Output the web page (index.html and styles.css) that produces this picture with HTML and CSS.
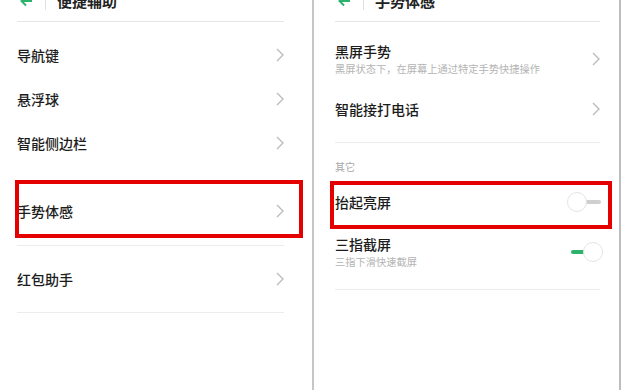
FILE: index.html
```html
<!DOCTYPE html>
<html lang="zh-CN">
	<head>
		<meta charset="UTF-8">
		<meta name="viewport" content="width=device-width, initial-scale=1">
		<title>手势体感</title>
		<link rel="stylesheet" href="styles.css">
	</head>
	<body>
		<div class="screens">
			<!-- left screen: 便捷辅助 -->
			<div class="panel panel-left">
				<div class="bar">
					<svg class="back" width="13" height="12" viewBox="0 0 13 12"><path d="M12 6H2M6 1.5L1.5 6 6 10.5" fill="none" stroke="#2bb36b" stroke-width="2"/></svg>
					<span class="sep"></span>
					<span class="title">便捷辅助</span>
				</div>
				<div class="list">
					<div class="item"><span>导航键</span><svg class="chev" width="8" height="14" viewBox="0 0 8 14"><polyline points="1,1 7,7 1,13"/></svg></div>
					<div class="item"><span>悬浮球</span><svg class="chev" width="8" height="14" viewBox="0 0 8 14"><polyline points="1,1 7,7 1,13"/></svg></div>
					<div class="item"><span>智能侧边栏</span><svg class="chev" width="8" height="14" viewBox="0 0 8 14"><polyline points="1,1 7,7 1,13"/></svg></div>
					<div class="item gesture marked"><span>手势体感</span><svg class="chev" width="8" height="14" viewBox="0 0 8 14"><polyline points="1,1 7,7 1,13"/></svg></div>
					<div class="rule rule-a"></div>
					<div class="item redpack"><span>红包助手</span><svg class="chev" width="8" height="14" viewBox="0 0 8 14"><polyline points="1,1 7,7 1,13"/></svg></div>
					<div class="rule"></div>
				</div>
			</div>

			<!-- right screen: 手势体感 -->
			<div class="panel panel-right">
				<div class="bar">
					<svg class="back" width="13" height="12" viewBox="0 0 13 12"><path d="M12 6H2M6 1.5L1.5 6 6 10.5" fill="none" stroke="#2bb36b" stroke-width="2"/></svg>
					<span class="sep"></span>
					<span class="title">手势体感</span>
				</div>
				<div class="list">
					<div class="item two first">
						<div class="text">
							<div class="name">黑屏手势</div>
							<div class="sub">黑屏状态下，在屏幕上通过特定手势快捷操作</div>
						</div>
						<svg class="chev" width="8" height="14" viewBox="0 0 8 14"><polyline points="1,1 7,7 1,13"/></svg>
					</div>
					<div class="item call"><span>智能接打电话</span><svg class="chev" width="8" height="14" viewBox="0 0 8 14"><polyline points="1,1 7,7 1,13"/></svg></div>
					<div class="rule"></div>
					<div class="label">其它</div>
					<div class="item raise marked">
						<span>抬起亮屏</span>
						<span class="switch"><span class="track"></span><span class="knob"></span></span>
					</div>
					<div class="item two shot">
						<div class="text">
							<div class="name">三指截屏</div>
							<div class="sub">三指下滑快速截屏</div>
						</div>
						<span class="switch on"><span class="track"></span><span class="knob"></span></span>
					</div>
					<div class="rule rule-b"></div>
				</div>
			</div>
		</div>
	</body>
</html>
```

FILE: styles.css
```css
html, body { margin: 0; padding: 0; background: #fff; }
body { font-family: "Noto Sans CJK SC", "Noto Sans", sans-serif; color: #1c1c1c; }

.screens { display: flex; height: 390px; overflow: hidden; }

.panel { background: #fff; }
.panel-left { width: 267px; padding: 0 28px 0 17px; border-right: 2px solid #c6c6c6; }
.panel-right { width: 265px; padding: 0 19px 0 21px; border-right: 2px solid #bdbdbd; }

/* title bar, cut off at the top of the shot */
.bar {
	display: flex;
	align-items: flex-start;
	box-sizing: border-box;
	height: 31px;
	margin-top: -9px;
	border-bottom: 1px solid #e6e6e6;
}
.back { margin: 4px 0 0 3px; }
.sep { width: 1px; height: 18px; margin: 1px 0 0 12px; background: #e0e0e0; }
.title { margin-left: 11px; font-size: 15px; line-height: 20px; font-weight: bold; color: #222; }

.list { padding-top: 11px; }
.panel-right .list { padding-top: 0; }

.item {
	position: relative;
	display: flex;
	align-items: center;
	justify-content: space-between;
	height: 44px;
	font-size: 14px;
	line-height: 18px;
	font-weight: 500;
}
.chev { fill: none; stroke: #bcbcbc; stroke-width: 1.4; flex: none; }

.rule { height: 1px; background: #ececec; }
.rule-a { margin-top: 5px; }
.rule-b { margin-top: 15px; }

/* left screen rows */
.item.gesture { height: 58px; margin-top: 17px; }
.item.redpack { height: 66px; }

/* right screen rows */
.item.first { height: 74px; }
.item.call { height: 26px; padding-bottom: 20px; }
.item.raise { height: 56px; }
.item.shot { height: 44px; }

.name { font-size: 14px; line-height: 18px; }
.sub { margin-top: 2px; font-size: 10.25px; line-height: 14px; font-weight: normal; color: #b4b4b4; }

.label { margin-top: 17px; font-size: 10px; line-height: 14px; color: #a8a8a8; }

/* switches */
.switch { position: relative; width: 34px; height: 20px; flex: none; margin-right: -1px; }
.switch .track { position: absolute; left: 4px; right: 0; top: 8px; height: 4px; border-radius: 2px; background: #cfcfcf; }
.switch .knob {
	position: absolute;
	left: 0;
	top: 0;
	width: 20px;
	height: 20px;
	box-sizing: border-box;
	border-radius: 50%;
	border: 1px solid #e4e4e4;
	background: #fff;
}
.switch.on { margin-right: -3px; }
.switch.on .track { left: 2px; right: 6px; background: #2bb36b; }
.switch.on .knob { left: auto; right: 0; }

/* red annotation frames drawn over the rows */
.marked:after {
	content: "";
	position: absolute;
	border: 4px solid #e50000;
	pointer-events: none;
}
.gesture.marked:after { top: -2px; left: -2px; right: -19px; bottom: 2px; }
.raise.marked:after { top: 7px; left: -5px; right: -12px; bottom: 1px; }
```
